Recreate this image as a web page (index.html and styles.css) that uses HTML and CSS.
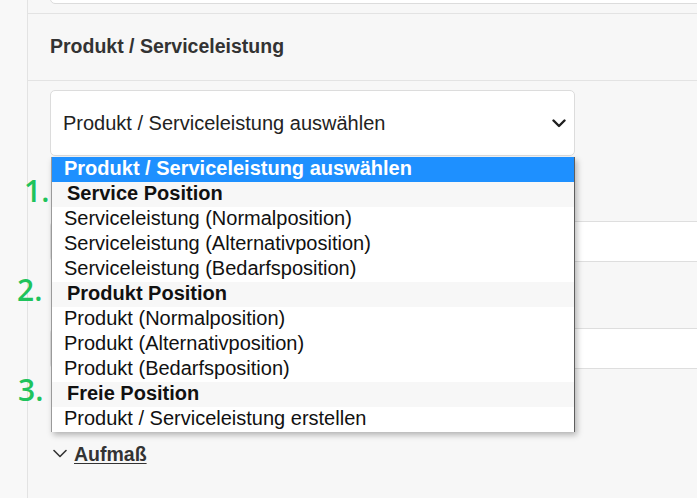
FILE: index.html
```html
<!DOCTYPE html>
<html lang="de">
<head>
<meta charset="utf-8">
<title>Produkt / Serviceleistung</title>
<link rel="stylesheet" href="styles.css">
</head>
<body>
<div class="app">
  <aside class="rail"></aside>
  <main class="content">
    <div class="top-row"><div class="top-field"></div></div>
    <section class="panel">
      <header class="panel-head"><h2 class="panel-title">Produkt / Serviceleistung</h2></header>
      <div class="panel-body">
        <div class="select-wrap">
          <div class="select">
            <span class="select-text">Produkt / Serviceleistung auswählen</span>
            <svg class="select-chev" width="14" height="9" viewBox="0 0 14 9"><polyline points="1.5,1.5 7,7 12.5,1.5" fill="none" stroke="#1f1f1f" stroke-width="2.4" stroke-linecap="round" stroke-linejoin="round"/></svg>
          </div>
          <ul class="listbox">
            <li class="opt selected">Produkt / Serviceleistung auswählen</li>
            <li class="group">Service Position</li>
            <li class="opt">Serviceleistung (Normalposition)</li>
            <li class="opt">Serviceleistung (Alternativposition)</li>
            <li class="opt">Serviceleistung (Bedarfsposition)</li>
            <li class="group">Produkt Position</li>
            <li class="opt">Produkt (Normalposition)</li>
            <li class="opt">Produkt (Alternativposition)</li>
            <li class="opt">Produkt (Bedarfsposition)</li>
            <li class="group">Freie Position</li>
            <li class="opt">Produkt / Serviceleistung erstellen</li>
          </ul>
        </div>
        <div class="input first"></div>
        <div class="input second"></div>
        <div class="aufmass">
          <svg class="aufmass-chev" width="14" height="9" viewBox="0 0 14 9"><polyline points="1,1.5 7,7.5 13,1.5" fill="none" stroke="#333" stroke-width="1.6" stroke-linecap="round" stroke-linejoin="round"/></svg>
          <span class="aufmass-link">Aufmaß</span>
        </div>
      </div>
    </section>
  </main>
  <div class="annot n1">1.</div>
  <div class="annot n2">2.</div>
  <div class="annot n3">3.</div>
</div>
</body>
</html>
```
FILE: styles.css
```css
* { box-sizing: border-box; }
html, body { margin: 0; padding: 0; }
body {
  width: 697px;
  height: 498px;
  overflow: hidden;
  background: #f7f7f7;
  font-family: "Liberation Sans", Arial, sans-serif;
  color: #333;
}
.app {
  position: relative;
  display: flex;
  height: 498px;
}
.rail {
  width: 28px;
  flex: 0 0 28px;
  background: #f8f8f8;
  border-right: 1px solid #e3e3e3;
}
.content {
  flex: 1;
  overflow: hidden;
}
.top-row {
  display: flow-root;
  padding-left: 22px;
  height: 13px;
}
.top-field {
  height: 40px;
  margin-top: -36px;
  margin-right: -12px;
  background: #fff;
  border: 1px solid #dcdcdc;
  border-radius: 5px;
}
.panel {
  border-top: 1px solid #e3e3e3;
}
.panel-head {
  height: 67px;
  border-bottom: 1px solid #e3e3e3;
  padding-left: 22px;
  padding-bottom: 2px;
  display: flex;
  align-items: center;
}
.panel-title {
  margin: 0;
  font-size: 19.5px;
  font-weight: bold;
  color: #333;
  line-height: 24px;
}
.panel-body {
  padding: 9px 0 0 22px;
}
.select-wrap {
  position: relative;
  width: 525px;
}
.select {
  height: 66px;
  background: #fff;
  border: 1px solid #dcdcdc;
  border-radius: 5px;
  display: flex;
  align-items: center;
  justify-content: space-between;
  padding: 0 8px 0 12px;
  font-size: 20px;
  color: #222;
}
.select-text { line-height: 24px; }
.select-chev { display: block; margin-top: 1px; }
.listbox {
  position: absolute;
  top: 67px;
  left: 1px;
  width: 524px;
  margin: 0;
  padding: 0;
  list-style: none;
  background: #fff;
  border-left: 1px solid #9a9a9a;
  border-right: 1px solid #5e5e5e;
  box-shadow: 2px 3px 6px rgba(0,0,0,0.28);
  z-index: 5;
}
.listbox li {
  height: 25px;
  line-height: 23px;
  padding-bottom: 2px;
  font-size: 20px;
  color: #111;
  white-space: nowrap;
}
.opt { padding-left: 12px; }
.opt.selected {
  background: #1e90ff;
  color: #fff;
  font-weight: bold;
}
.group {
  padding-left: 15px;
  background: #f7f7f7;
  font-weight: bold;
  color: #000;
}
.input {
  height: 41px;
  margin-right: -12px;
  background: #fff;
  border-top: 1px solid #dedede;
  border-bottom: 1px solid #dedede;
  border-left: 1px solid #dedede;
  border-radius: 5px 0 0 5px;
}
.input.first { margin-top: 65px; }
.input.second { margin-top: 66px; }
.aufmass {
  margin-top: 73px;
  display: flex;
  align-items: center;
  gap: 7px;
  padding-left: 3px;
}
.aufmass-chev { display: block; margin-top: -2px; }
.aufmass-link {
  font-size: 19.5px;
  font-weight: bold;
  color: #333;
  text-decoration: underline;
  text-underline-offset: 2px;
  line-height: 24px;
}
.annot {
  position: absolute;
  font-family: "Open Sans", "Noto Sans", sans-serif;
  font-size: 30px;
  font-weight: 600;
  line-height: 30px;
  color: #1fc35c;
  z-index: 10;
}
.n1 { left: 24px; top: 176px; }
.n2 { left: 17px; top: 275px; }
.n3 { left: 18px; top: 375px; }
```
